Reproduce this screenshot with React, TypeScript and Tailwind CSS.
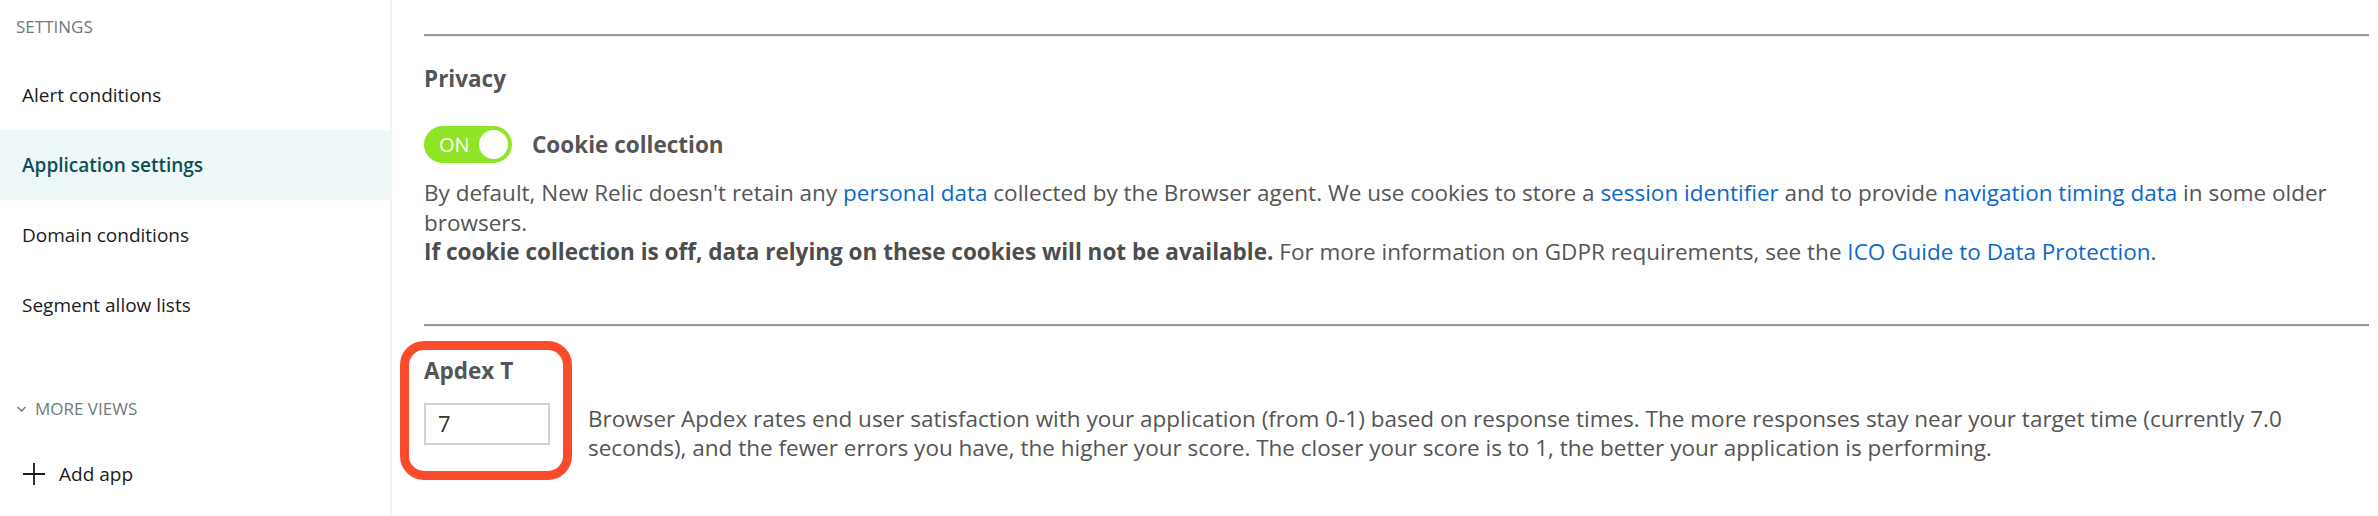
import React from "react";

const font = { fontFamily: '"Open Sans", "Liberation Sans", sans-serif' };

function SideItem({ label, active }: { label: string; active?: boolean }) {
  return (
    <div
      className={
        "h-[70px] flex items-center px-[22px] text-[19px] leading-[28px] " +
        (active ? "bg-[#eef8f9] text-[#0b4f57] font-semibold" : "text-[#1b1b1b]")
      }
    >
      {label}
    </div>
  );
}

function Divider() {
  return (
    <div>
      <div className="h-[2px] bg-[#9a9a9a]" />
      <div className="h-px bg-[#ececec]" />
    </div>
  );
}

const A = ({ children }: { children: React.ReactNode }) => (
  <a className="text-[#0b69c9]">{children}</a>
);

export default function App() {
  return (
    <div style={font} className="flex w-[2378px] h-[516px] bg-white overflow-hidden">
      <aside className="w-[392px] shrink-0 border-r-2 border-[#f3f5f5] flex flex-col">
        <div className="h-[60px] pt-[15px] px-[16px] text-[17px] leading-[24px] text-[#6f7a7a]">
          SETTINGS
        </div>
        <SideItem label="Alert conditions" />
        <SideItem label="Application settings" active />
        <SideItem label="Domain conditions" />
        <SideItem label="Segment allow lists" />
        <div className="mt-[49px] h-[40px] flex items-center pl-[16px] text-[17px] text-[#717b7b]">
          <svg width="11" height="8" viewBox="0 0 11 8" className="mr-[8px]">
            <path d="M1.5 2 L5.5 6 L9.5 2" fill="none" stroke="#717b7b" strokeWidth="1.4" />
          </svg>
          MORE VIEWS
        </div>
        <div className="mt-[20px] h-[50px] flex items-center pl-[23px] text-[19px] text-[#1b1b1b]">
          <svg width="22" height="22" viewBox="0 0 22 22" className="mr-[14px]">
            <path d="M11 0 V22 M0 11 H22" stroke="#1b1b1b" strokeWidth="1.8" />
          </svg>
          Add app
        </div>
      </aside>

      <main className="flex-1 pl-[32px] pr-[9px] pt-[34px] text-[#555555]">
        <Divider />
        <h2 className="mt-[27px] text-[22.5px] leading-[30px] font-bold text-[#555555]">Privacy</h2>
        <div className="mt-[32px] flex items-center">
          <div className="relative w-[88px] h-[37px] rounded-full bg-[#90e428] flex items-center">
            <span className="pl-[15px] text-[20px] text-white leading-none">ON</span>
            <span className="absolute right-[4px] top-[4px] w-[29px] h-[29px] rounded-full bg-white" />
          </div>
          <span className="ml-[20px] text-[22.5px] font-bold text-[#555555]">Cookie collection</span>
        </div>
        <p className="mt-[15px] text-[22.5px] leading-[29.5px]">
          By default, New Relic doesn't retain any <A>personal data</A> collected by the Browser agent. We use
          cookies to store a <A>session identifier</A> and to provide <A>navigation timing data</A> in some older
          browsers.
          <br />
          <b className="font-bold text-[#4d4d4d]">If cookie collection is off, data relying on these cookies will not be available.</b>{" "}
          For more information on GDPR requirements, see the <A>ICO Guide to Data Protection</A>.
        </p>
        <div className="mt-[57px]">
          <Divider />
        </div>
        <div className="relative mt-[29px]">
          <div className="absolute left-[-24px] top-[-15px] w-[172px] h-[139px] border-[9px] border-[#fc4b2c] rounded-[24px] pointer-events-none" />
          <h2 className="text-[22.5px] leading-[30px] font-bold text-[#555555]">Apdex T</h2>
          <div className="mt-[17px] flex items-start">
            <div className="w-[126px] h-[42px] shrink-0 border-2 border-[#d2d2d2] flex items-center pl-[12px] text-[22px] text-[#333]">
              7
            </div>
            <p className="ml-[38px] mt-px text-[22.5px] leading-[29.5px]">
              Browser Apdex rates end user satisfaction with your application (from 0-1) based on response times. The
              more responses stay near your target time (currently 7.0 seconds), and the fewer errors you have, the
              higher your score. The closer your score is to 1, the better your application is performing.
            </p>
          </div>
        </div>
      </main>
    </div>
  );
}
